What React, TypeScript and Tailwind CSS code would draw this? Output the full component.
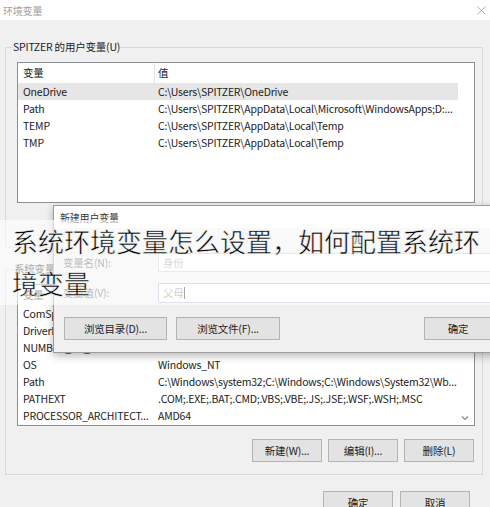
import React from 'react';

interface EnvVar {
  name: string;
  value: string;
}

const userVars: EnvVar[] = [
  { name: 'OneDrive', value: 'C:\\Users\\SPITZER\\OneDrive' },
  { name: 'Path', value: 'C:\\Users\\SPITZER\\AppData\\Local\\Microsoft\\WindowsApps;D:...' },
  { name: 'TEMP', value: 'C:\\Users\\SPITZER\\AppData\\Local\\Temp' },
  { name: 'TMP', value: 'C:\\Users\\SPITZER\\AppData\\Local\\Temp' },
];

const systemVars: EnvVar[] = [
  { name: 'ComSpec', value: 'C:\\Windows\\system32\\cmd.exe' },
  { name: 'DriverData', value: 'C:\\Windows\\System32\\Drivers\\DriverData' },
  { name: 'NUMBER_OF_PROCESSORS', value: '4' },
  { name: 'OS', value: 'Windows_NT' },
  { name: 'Path', value: 'C:\\Windows\\system32;C:\\Windows;C:\\Windows\\System32\\Wb...' },
  { name: 'PATHEXT', value: '.COM;.EXE;.BAT;.CMD;.VBS;.VBE;.JS;.JSE;.WSF;.WSH;.MSC' },
  { name: 'PROCESSOR_ARCHITECT...', value: 'AMD64' },
];

const WinButton: React.FC<{ label: string; className?: string }> = ({ label, className = '' }) => (
  <div
    className={`h-[23px] flex items-center justify-center bg-[#e3e3e3] border border-[#b4b4b4] text-[#222] ${className}`}
  >
    {label}
  </div>
);

const VarList: React.FC<{ rows: EnvVar[]; selected?: number; height: string; scroll?: boolean }> = ({
  rows,
  selected,
  height,
  scroll,
}) => (
  <div className={`relative ml-[11px] mt-[8px] w-[458px] ${height} border border-[#8c8f94] bg-white overflow-hidden`}>
    <div className="flex h-[20px] items-center">
      <div className="w-[136px] shrink-0 pl-[5px]">变量</div>
      <div className="h-full flex items-center border-l border-[#e5e5e5] pl-[3px]">值</div>
    </div>
    {rows.map((row, i) => (
      <div
        key={row.name + i}
        className={`flex h-[17px] w-[440px] items-center whitespace-nowrap ${i === selected ? 'bg-[#e6e6e6]' : ''}`}
      >
        <div className="w-[136px] shrink-0 pl-[5px] overflow-hidden">{row.name}</div>
        <div className="pl-[4px]">{row.value}</div>
      </div>
    ))}
    {scroll && (
      <svg className="absolute right-[5px] bottom-[4px]" width="8" height="6" viewBox="0 0 8 6">
        <path d="M1 1.5 L4 4.5 L7 1.5" stroke="#888" strokeWidth="1.2" fill="none" />
      </svg>
    )}
  </div>
);

const App: React.FC = () => {
  return (
    <div className="relative w-[490px] h-[507px] overflow-hidden bg-[#f0f0f0] font-['Noto_Sans_CJK_SC',sans-serif] text-[10.5px] tracking-[-0.2px] text-[#222]">
      {/* title bar */}
      <div className="h-[20px] bg-white flex items-center justify-between pl-[3px] pr-[4px]">
        <span className="text-[10px] text-[#a0a0a0]">环境变量</span>
        <svg width="9" height="9" viewBox="0 0 9 9">
          <path d="M0.5 0.5 L8.5 8.5 M8.5 0.5 L0.5 8.5" stroke="#b0b0b0" strokeWidth="1" />
        </svg>
      </div>

      {/* user variables */}
      <fieldset className="mt-[20px] ml-[5px] mr-[7px] border border-[#d9d9d9] pb-[10px]">
        <legend className="ml-[7px] leading-[14px]">SPITZER 的用户变量(U)</legend>
        <VarList rows={userVars} selected={0} height="h-[141px]" />
        <div className="mt-[11px] flex justify-end gap-[7px] pr-[8px]">
          <WinButton label="新建(N)..." className="w-[70px]" />
          <WinButton label="编辑(E)..." className="w-[70px]" />
          <WinButton label="删除(D)" className="w-[70px]" />
        </div>
      </fieldset>

      {/* system variables */}
      <fieldset className="mt-[14px] ml-[5px] mr-[7px] border border-[#d9d9d9] pb-[12px]">
        <legend className="ml-[8px] leading-[14px]">系统变量(S)</legend>
        <VarList rows={systemVars} height="h-[142px]" scroll />
        <div className="mt-[13px] flex justify-end gap-[6px] pr-[8px]">
          <WinButton label="新建(W)..." className="w-[70px]" />
          <WinButton label="编辑(I)..." className="w-[70px]" />
          <WinButton label="删除(L)" className="w-[70px]" />
        </div>
      </fieldset>

      <div className="mt-[16px] flex justify-end gap-[7px] pr-[20px]">
        <WinButton label="确定" className="w-[70px]" />
        <WinButton label="取消" className="w-[70px]" />
      </div>

      {/* new user variable dialog */}
      <div className="absolute left-[53px] top-[205px] w-[470px] h-[148px] flex flex-col border border-[#9c9c9c] bg-[#f0f0f0] shadow-[0_3px_8px_rgba(0,0,0,0.28)]">
        <div className="h-[22px] shrink-0 bg-white flex items-center pl-[6px] text-[10px] text-[#333]">新建用户变量</div>
        <div className="flex flex-col pt-[25px]">
          <div className="flex items-center">
            <div className="w-[104px] pl-[9px] text-[#555]">变量名(N):</div>
            <div className="flex-1 h-[19px] flex items-center border border-[#c9c9c9] bg-white pl-[4px] text-[#9a9a9a]">身份</div>
          </div>
          <div className="mt-[11px] flex items-center">
            <div className="w-[104px] pl-[9px] text-[#555]">变量值(V):</div>
            <div className="flex-1 h-[20px] flex items-center border border-[#a9b7cc] bg-white pl-[4px] text-[#8a8a8a]">
              父母
              <span className="inline-block w-px h-[12px] bg-[#222]" />
            </div>
          </div>
          <div className="mt-[14px] flex">
            <WinButton label="浏览目录(D)..." className="ml-[10px] w-[103px] h-[21px]" />
            <WinButton label="浏览文件(F)..." className="ml-[9px] w-[104px] h-[21px]" />
            <WinButton label="确定" className="ml-[144px] w-[68px] h-[21px] border-[#2f78bd]" />
          </div>
        </div>
      </div>

      {/* caption overlay */}
      <div className="absolute left-0 top-[220px] w-full h-[85px] bg-white/60 pl-[12px] text-[26px] leading-[42px] tracking-normal text-black [-webkit-text-stroke:0.55px_#f4f4f4]">
        系统环境变量怎么设置，如何配置系统环境变量
      </div>
    </div>
  );
};

export default App;
